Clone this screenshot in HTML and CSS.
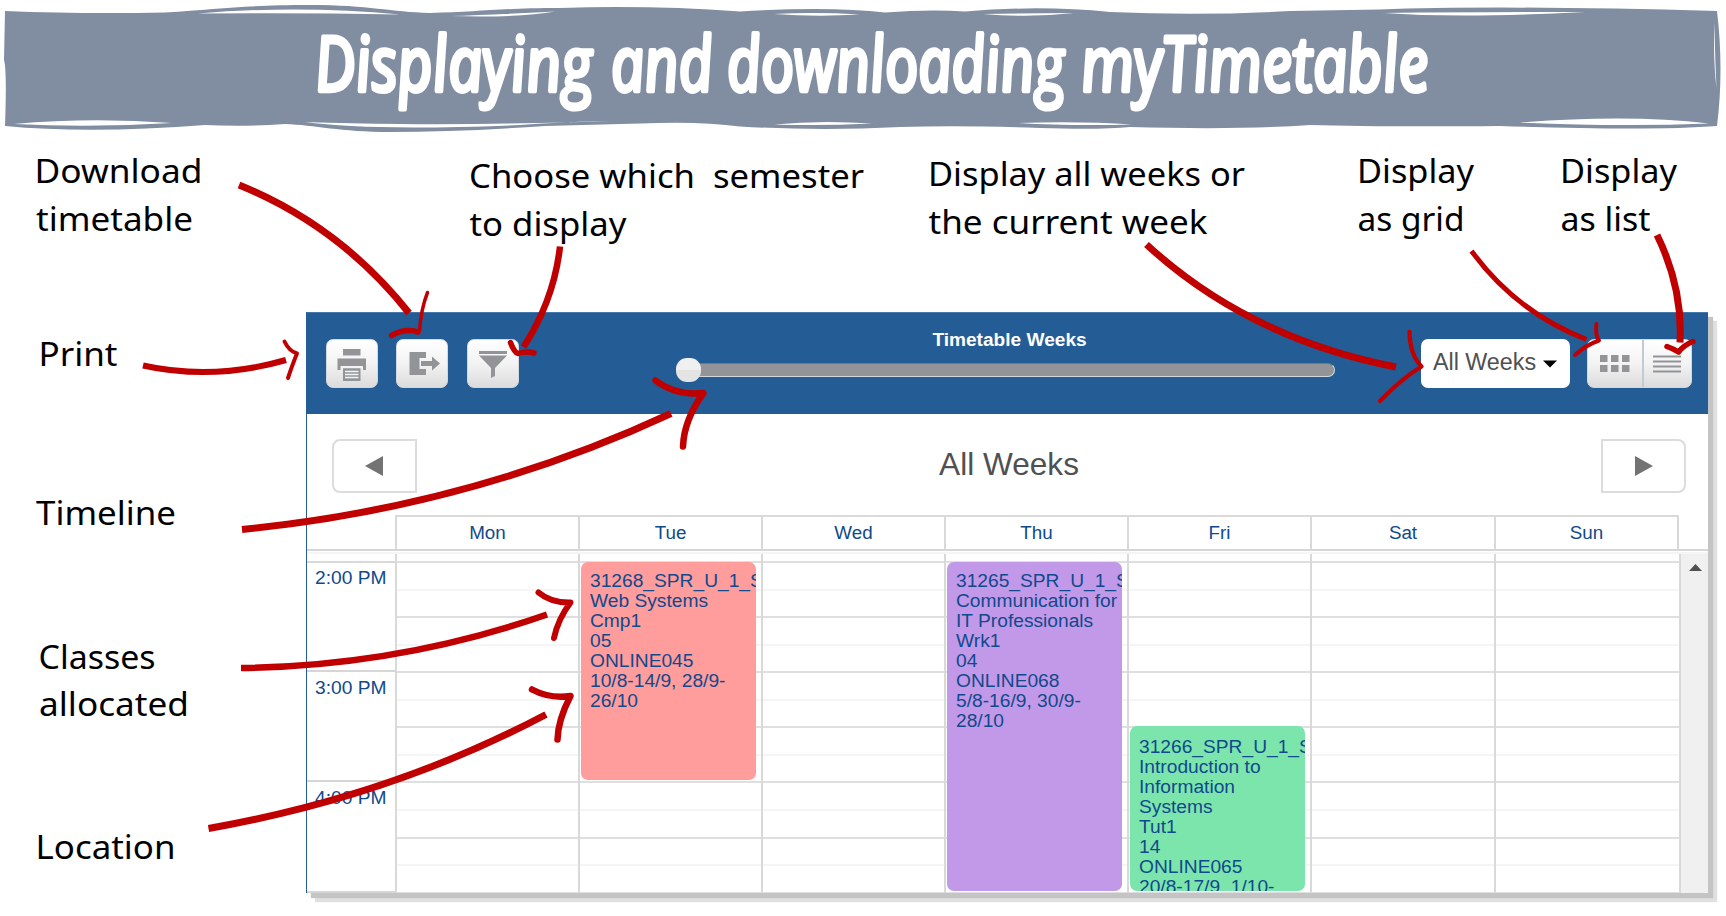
FILE: index.html
```html
<!DOCTYPE html>
<html lang="en">
<head>
<meta charset="utf-8">
<title>Displaying and downloading myTimetable</title>
<link rel="stylesheet" href="styles.css">
</head>
<body>
<header class="banner">
  <svg width="1726" height="136" viewBox="0 0 1726 136">
    <path fill="#818da1" d="M5 11 Q80 14 165 12.500 C220 9 250 5 310 5 C370 5 390 12 430 13 C480 12 500 8 560 8 Q650 5 740 11.500 Q830 6 885 12.500 Q930 9 965 11.500 Q1040 5 1110 12 Q1200 16 1290 11 L1380 9.500 Q1500 5 1717 11 Q1724 70 1717 126 Q1650 131 1500 126 Q1380 127 1310 125 Q1240 130 1130 127 Q1100 130 1040 128 Q960 125 900 127 Q820 131 740 126.500 Q700 121 640 123.500 L545 126 Q460 132 390 132 C340 132 315 125 285 124 Q245 127 205 125 Q90 134 5 126 Q7 70 4 60Z"/>
    <g fill="#fff">
      <path d="M198 13.500 Q300 5 400 14.500 Q300 12.500 198 13.500ZM450 16 Q495 14.500 555 11.500 Q520 18 450 16ZM774 14 Q816 12 860 14.500 Q816 17 774 14ZM983 14 Q1030 13 1074 13 Q1030 18 983 14ZM1384 13 Q1480 12 1585 12 Q1460 18.500 1384 13Z"/>
      <path d="M14 124 Q90 117 172 123 Q90 128 14 124ZM305 122 Q350 123.500 400 124 Q500 125 625 120.500 Q560 122 520 125 Q370 131 305 122ZM774 124.500 Q820 120 872 123.500 Q820 126 774 124.500ZM1018 123 Q1080 121 1132 124.500 Q1070 126 1018 123ZM1520 122.500 Q1630 114 1709 123.500 Q1620 127 1520 122.500ZM1714.500 22 Q1713 60 1716.500 88 Q1715 60 1714.500 22Z"/>
    </g>
    <g class="banner-title">
      <text transform="translate(317 91) skewX(6)" textLength="278" lengthAdjust="spacingAndGlyphs">Displaying</text>
      <text transform="translate(613 91) skewX(6)" textLength="102" lengthAdjust="spacingAndGlyphs">and</text>
      <text transform="translate(729 91) skewX(6)" textLength="338" lengthAdjust="spacingAndGlyphs">downloading</text>
      <text transform="translate(1083 91) skewX(6)" textLength="348" lengthAdjust="spacingAndGlyphs">myTimetable</text>
    </g>
  </svg>
</header>

<main class="app">
  <div class="toolbar">
    <div class="tools">
      <button class="tool"><svg width="50" height="47" viewBox="0 0 50 47"><g fill="#929497"><path d="M16 9h17.500v6.500H16zM10.500 18.500h28.500V30h-3v-4H13.500v4h-3z"/><path d="M16 28h17.500v13H16z"/></g><path d="M14.500 27.500h20.500M18 31.500h13.500M18 34.500h13.500M18 37.500h13.500" stroke="#f4f4f4" stroke-width="1.300"/></svg></button>
      <button class="tool"><svg width="50" height="47" viewBox="0 0 50 47"><path fill="#929497" d="M12.500 12h16.500v6h-6.500v11H29v6H12.500z"/><path fill="#929497" d="M24 21h11v-4.500l8 7-8 7V26H24z"/></svg></button>
      <button class="tool"><svg width="50" height="47" viewBox="0 0 50 47"><path fill="#929497" d="M11 11h28v3H11zM11 15.500h28L27 28v8l-4 2V28z"/></svg></button>
    </div>
    <div class="weeks">
      <div class="weeks-label">Timetable Weeks</div>
      <div class="slider"><div class="track"></div><div class="thumb"></div></div>
    </div>
    <button class="dropdown">All Weeks<svg width="14" height="8" viewBox="0 0 14 8"><path d="M0 .5h14L7 7.500z"/></svg></button>
    <div class="views">
      <button class="grid-view"><svg width="30" height="18" viewBox="0 0 30 18"><path fill="#929497" d="M0 0h7.500v7H0zM11 0h7.500v7H11zM22 0h7.500v7H22zM0 10h7.500v7H0zM11 10h7.500v7H11zM22 10h7.500v7H22z"/></svg></button>
      <button class="list-view"><svg width="28" height="18" viewBox="0 0 28 18"><path stroke="#929497" stroke-width="1.800" d="M0 1.500h28M0 6.500h28M0 11.500h28M0 16.500h28"/></svg></button>
    </div>
  </div>

  <div class="nav">
    <button class="prev"><svg width="18" height="20" viewBox="0 0 18 20"><path fill="#737373" d="M18 0v20L0 10z"/></svg></button>
    <h2>All Weeks</h2>
    <button class="next"><svg width="18" height="20" viewBox="0 0 18 20"><path fill="#737373" d="M0 0v20l18-10z"/></svg></button>
  </div>

  <div class="days">
    <div class="corner"></div>
    <div>Mon</div><div>Tue</div><div>Wed</div><div>Thu</div><div>Fri</div><div>Sat</div><div>Sun</div>
  </div>

  <div class="calendar">
    <div class="times"><div>2:00 PM</div><div>3:00 PM</div><div>4:00 PM</div></div>
    <div class="day"></div>
    <div class="day"><div class="event red">31268_SPR_U_1_S<br>Web Systems<br>Cmp1<br>05<br>ONLINE045<br>10/8-14/9, 28/9-<br>26/10</div></div>
    <div class="day"></div>
    <div class="day"><div class="event purple">31265_SPR_U_1_S<br>Communication for<br>IT Professionals<br>Wrk1<br>04<br>ONLINE068<br>5/8-16/9, 30/9-<br>28/10</div></div>
    <div class="day"><div class="event green">31266_SPR_U_1_S<br>Introduction to<br>Information<br>Systems<br>Tut1<br>14<br>ONLINE065<br>20/8-17/9, 1/10-</div></div>
    <div class="day"></div>
    <div class="day"></div>
    <div class="scrollbar"><svg width="13" height="7" viewBox="0 0 13 7"><path fill="#505050" d="M0 7h13L6.500 0z"/></svg></div>
  </div>
</main>

<svg class="notes" width="1726" height="916" viewBox="0 0 1726 916">
  <g class="note-text">
    <text x="34.500" y="183" textLength="168" lengthAdjust="spacingAndGlyphs">Download</text>
    <text x="36" y="231" textLength="157" lengthAdjust="spacingAndGlyphs">timetable</text>
    <text x="469" y="187.500" textLength="395" lengthAdjust="spacingAndGlyphs">Choose which&#160; semester</text>
    <text x="469.500" y="235.500" textLength="157" lengthAdjust="spacingAndGlyphs">to display</text>
    <text x="928" y="185.500" textLength="317" lengthAdjust="spacingAndGlyphs">Display all weeks or</text>
    <text x="928.500" y="233.500" textLength="279" lengthAdjust="spacingAndGlyphs">the current week</text>
    <text x="1357" y="182.500" textLength="117" lengthAdjust="spacingAndGlyphs">Display</text>
    <text x="1357.500" y="230.500" textLength="107" lengthAdjust="spacingAndGlyphs">as grid</text>
    <text x="1560" y="182.500" textLength="117" lengthAdjust="spacingAndGlyphs">Display</text>
    <text x="1560.500" y="230.500" textLength="90" lengthAdjust="spacingAndGlyphs">as list</text>
    <text x="38.500" y="365.500" textLength="79" lengthAdjust="spacingAndGlyphs">Print</text>
    <text x="36" y="524.500" textLength="140" lengthAdjust="spacingAndGlyphs">Timeline</text>
    <text x="38.500" y="668.500" textLength="117" lengthAdjust="spacingAndGlyphs">Classes</text>
    <text x="39" y="716" textLength="150" lengthAdjust="spacingAndGlyphs">allocated</text>
    <text x="35.500" y="858.500" textLength="140" lengthAdjust="spacingAndGlyphs">Location</text>
  </g>
  <g class="shafts">
    <path stroke-width="7" d="M239 185Q340 226 409 313"/>
    <path stroke-width="6.500" d="M560 246.500Q554 300 523.500 347"/>
    <path stroke-width="7" d="M1146.500 244.500Q1248 338 1396 367"/>
    <path stroke-width="5" d="M1471.500 251Q1516 312 1586.500 339.500"/>
    <path stroke-width="7" d="M1657 235Q1683 288 1680 342.500"/>
    <path stroke-width="6" d="M143 365.500Q213 381 286 360"/>
    <path stroke-width="7" d="M242 529.500Q470 507 671 413.500"/>
    <path stroke-width="6.500" d="M241 668Q400 666 547 614.500"/>
    <path stroke-width="7" d="M208.500 828.500Q392 796 546 714.500"/>
  </g>
  <g class="heads">
    <path stroke-width="3.500" d="M427.500 292.500Q421 309 419.500 331"/>
    <path stroke-width="5.500" d="M391.500 335.500Q405 328 418 332"/>
    <path stroke-width="5.500" d="M510.500 342.500Q514 352 518 353.500Q526 351 534 353"/>
    <path stroke-width="4.300" d="M1409.500 332Q1410 355 1421.500 366.500Q1401 379 1380 401"/>
    <path stroke-width="4" d="M1596.500 324Q1595 335 1599 340.500Q1586 345 1575 355"/>
    <path stroke-width="5.500" d="M1667 346.500Q1674 349 1678.500 352Q1684 345 1693 341.500"/>
    <path stroke-width="4" d="M284.500 341.500Q289 351 297 353.500Q293 363 288 378"/>
    <path stroke-width="6.500" d="M655.500 380.500Q676 396 703.500 393Q684 420 683 446.500"/>
    <path stroke-width="6" d="M538.500 592.500Q551 603 570.500 602.500Q558 619 554 638"/>
    <path stroke-width="6.500" d="M532 689.500Q550 699 570.500 696Q558 720 557.500 739.500"/>
  </g>
</svg>
</body>
</html>
```
FILE: styles.css
```css
* { box-sizing: border-box; }
body {
  margin: 0;
  width: 1726px;
  height: 916px;
  overflow: hidden;
  position: relative;
  background: #fff;
  font-family: "Liberation Sans", Arial, sans-serif;
  color: #10498c;
}
button { padding: 0; margin: 0; border: 0; font: inherit; color: inherit; display: flex; align-items: center; justify-content: center; }
svg { display: block; flex: none; }

.banner { height: 312px; }
.banner-title text {
  font: italic 400 76px "Open Sans", "Noto Sans", sans-serif;
  fill: #fff;
  stroke: #fff;
  stroke-width: 4.500px;
  stroke-linejoin: round;
}

.app {
  margin-left: 306px;
  width: 1402px;
  height: 581px;
  background: #fff;
  border-left: 1px solid #245c95;
  box-shadow: 5px 5px 1px #c4c4c4, 9px 9px 1px #e0e0e0;
  display: flex;
  flex-direction: column;
}

.toolbar {
  height: 102px;
  flex: none;
  background: #245c95;
  border-top: 1px solid #4377ab;
  display: flex;
  align-items: flex-start;
  padding: 26px 15px 0 18.500px;
}
.tools { display: flex; gap: 18.500px; }
.tool, .views {
  height: 49px;
  border: 1px solid #d4d8dd;
  border-radius: 7px;
  background: linear-gradient(#fff, #f3f3f3 50%, #dcdcdc);
}
.tool { width: 52px; }
.weeks { margin-left: 157.500px; width: 659px; }
.weeks-label {
  margin-top: -10px;
  height: 22px;
  line-height: 22px;
  width: 667px;
  text-align: center;
  font-size: 19.100px;
  font-weight: 700;
  color: #fff;
}
.slider { display: flex; align-items: center; height: 25px; margin-top: 6px; }
.track {
  order: 2;
  flex: 1;
  height: 14px;
  margin-left: -12px;
  background: #929497;
  border: 1px solid #d4d8dd;
  border-top-color: #747678;
  border-radius: 8px;
}
.thumb {
  order: 1;
  width: 25px;
  height: 24px;
  border-radius: 11px;
  background: linear-gradient(#f0f0f0 50%, #e4e4e4 50%);
  position: relative;
  z-index: 1;
}
.dropdown {
  margin-left: 86px;
  width: 149px;
  height: 49px;
  background: #fff;
  border-radius: 7px;
  color: #505050;
  font-size: 23.300px;
  gap: 7px;
  padding: 0 1px 3px 0;
}
.dropdown svg { fill: #000; margin-top: 3px; }
.views { display: flex; width: 105px; margin-left: 17px; }
.views button { background: none; height: 100%; }
.grid-view { width: 54px; padding-left: 2px; }
.views .list-view { width: 49px; border-left: 2px solid #c3cad2; }
.grid-view svg { margin-right: 2px; }
.list-view svg { margin-right: 2px; }

.nav {
  height: 102px;
  flex: none;
  display: flex;
  justify-content: space-between;
  align-items: flex-start;
  padding: 25px 22px 0 25px;
}
.nav button { width: 85px; height: 54px; background: #fff; border: 2px solid #dcdcdc; }
.nav .prev { border-radius: 8px 0 0 8px; padding-right: 2px; }
.nav .next { border-radius: 0 8px 8px 0; }
.nav h2 { margin: 7px 0 0; font-size: 31.600px; font-weight: 400; line-height: 36px; color: #505050; }

.days, .calendar {
  display: grid;
  grid-template-columns: 88px repeat(5, 183px) 184px 185px 1fr;
}
.days { height: 36px; flex: none; margin-top: -1px; border-bottom: 2px solid #d6d6d6; }
.days div {
  border-top: 2px solid #dadada;
  border-left: 2px solid #d9d9d9;
  text-align: center;
  font-size: 18.800px;
  line-height: 31px;
}
.days div:last-child { border-right: 2px solid #d9d9d9; }
.days .corner { border: 0; }

.calendar {
  flex: 1;
  min-height: 0;
  overflow: hidden;
  margin-top: 1px;
  border-top: 2px solid #f5f5f5;
}
.times { padding-top: 8px; background: linear-gradient(#d9d9d9, #d9d9d9) 0 7px / 100% 2px no-repeat; }
.times div {
  height: 110.200px;
  padding: 5px 0 0 8px;
  font-size: 19.200px;
  line-height: 22px;
  border-bottom: 2px solid #d6d6d6;
  white-space: nowrap;
}
.day {
  border-left: 2px solid #d9d9d9;
  padding: 8px 0 0 1px;
  background: repeating-linear-gradient(#dfdfdf 0 2px, #fff 2px 27.500px, #f5f5f5 27.500px 29.500px, #fff 29.500px 55.100px) 0 7px no-repeat;
}
.event {
  width: 175px;
  border-radius: 7px;
  padding: 9px 0 0 9px;
  font-size: 19.200px;
  line-height: 20px;
  white-space: nowrap;
  overflow: hidden;
}
.red { height: 218px; background: #ff9c9c; }
.purple { height: 329px; background: #c199e8; }
.green { height: 165px; margin-top: 164px; padding-top: 11px; background: #7be5ac; }
.scrollbar { background: #f0f0f0; border-left: 2px solid #d9d9d9; padding: 10px 0 0 8px; }

.notes { position: absolute; left: 0; top: 0; pointer-events: none; }
.note-text text { font: 400 33.500px "Noto Sans", sans-serif; fill: #000; white-space: pre; }
.shafts path { fill: none; stroke: #c00000; }
.heads path { fill: none; stroke: #c00000; stroke-linecap: round; stroke-linejoin: round; }
```
